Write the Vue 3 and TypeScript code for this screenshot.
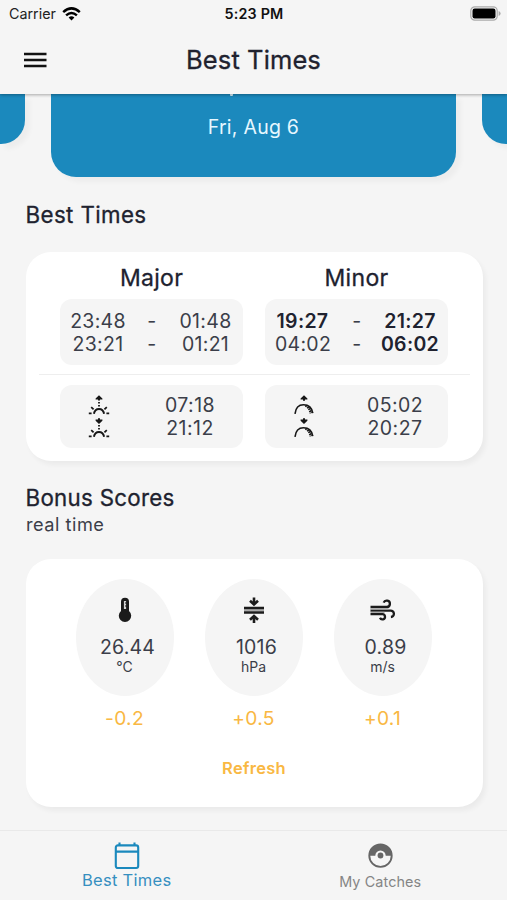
<script setup lang="ts">
interface Span { from: string; to: string; fromBold?: boolean; toBold?: boolean }
interface Period { title: string; kind: 'sun' | 'moon'; spans: Span[]; rise: string; set: string }
interface Score { id: 'temp' | 'pressure' | 'wind'; value: string; unit: string; bonus: string }

const periods: Period[] = [
  {
    title: 'Major', kind: 'sun', rise: '07:18', set: '21:12',
    spans: [{ from: '23:48', to: '01:48' }, { from: '23:21', to: '01:21' }],
  },
  {
    title: 'Minor', kind: 'moon', rise: '05:02', set: '20:27',
    spans: [
      { from: '19:27', to: '21:27', fromBold: true, toBold: true },
      { from: '04:02', to: '06:02', toBold: true },
    ],
  },
]
const scores: Score[] = [
  { id: 'temp', value: '26.44', unit: '°C', bonus: '-0.2' },
  { id: 'pressure', value: '1016', unit: 'hPa', bonus: '+0.5' },
  { id: 'wind', value: '0.89', unit: 'm/s', bonus: '+0.1' },
]
</script>

<template>
  <div class="screen">
    <header class="top">
      <div class="status">
        <div class="carrier">
          <span>Carrier</span>
          <svg width="19" height="14" viewBox="0 0 19 14" fill="none" stroke="#000" stroke-width="2.5">
            <path d="M1.2 5.2Q9.5-2.4 17.8 5.2" />
            <path d="M4.1 8.4Q9.5 3.6 14.9 8.4" />
            <path d="M6.6 10.5Q9.5 8.2 12.4 10.5L9.5 13.6Z" fill="#000" stroke="none" />
          </svg>
        </div>
        <span class="clock">5:23 PM</span>
        <svg class="battery" width="31" height="15" viewBox="0 0 31 15">
          <rect x=".8" y=".8" width="26.4" height="13.4" rx="4" fill="#f5f5f5" stroke="#aaa" stroke-width="1.2" />
          <rect x="2.5" y="2.5" width="23" height="10" rx="2.2" />
          <path d="M28.6 5v5q2-.7 2-2.5T28.6 5Z" fill="#aaa" />
        </svg>
      </div>
      <div class="titlebar">
        <svg width="24" height="18" viewBox="0 0 24 18" stroke="#111" stroke-width="2.5">
          <path d="M1 3H23.5M1 9H23.5M1 15H23.5" />
        </svg>
        <h1>Best Times</h1>
      </div>
    </header>

    <main>
      <section class="carousel">
        <div class="day side left"></div>
        <div class="day current">
          <i class="tail"></i>
          <span>Fri, Aug 6</span>
        </div>
        <div class="day side right"></div>
      </section>

      <h2 class="times-title">Best Times</h2>
      <section class="card times">
        <div class="periods">
          <div v-for="p in periods" :key="p.title" class="period">
            <h3>{{ p.title }}</h3>
            <div class="box">
              <div v-for="s in p.spans" :key="s.from" class="row">
                <span :class="{ bold: s.fromBold }">{{ s.from }}</span>
                <span class="dash">-</span>
                <span :class="{ bold: s.toBold }">{{ s.to }}</span>
              </div>
            </div>
          </div>
        </div>
        <div class="rule"></div>
        <div class="periods astro">
          <div v-for="p in periods" :key="p.title" class="box low">
            <div v-for="dir in (['rise', 'set'] as const)" :key="dir" class="row two">
              <span class="glyph">
                <svg width="22" height="22" viewBox="0 0 22 22" fill="none" stroke="#171717" stroke-width="1.6">
                  <template v-if="p.kind === 'sun'">
                    <path v-if="dir === 'rise'" d="M11 .2L14.4 3.4V4.6H12V5.6H10V4.6H7.6V3.4Z" fill="#171717" stroke="none" />
                    <path v-else d="M11 6L14.4 2.8V1.6H12V.2H10V1.6H7.6V2.8Z" fill="#171717" stroke="none" />
                    <path d="M11 7V8.6M11 10V11.6" stroke-width="1.8" />
                    <path d="M5.9 18.8Q6.8 14 11 14T16.1 18.8" stroke-width="2" />
                    <path d="M.8 18.4H3.6M18.4 18.4H21.2M3.2 12.2L5.6 14.4M18.8 12.2L16.4 14.4" stroke-width="1.8" />
                  </template>
                  <template v-else>
                    <path v-if="dir === 'rise'" d="M11 .2L14.4 3.4V4.6H12V5.8H10V4.6H7.6V3.4Z" fill="#171717" stroke="none" />
                    <path v-else d="M11 6L14.4 2.8V1.6H12V.2H10V1.6H7.6V2.8Z" fill="#171717" stroke="none" />
                    <path d="M2 18.8Q3 9.8 10.5 9.8Q18.5 9.8 19.8 18.2" />
                    <path d="M12.5 10.6Q17 13.6 17.5 18.4" stroke-width="2" stroke-dasharray="1.5 .7" />
                    <path d="M15.5 12.1Q18.5 14.6 18.8 18.4" stroke-width="1.4" stroke-dasharray="1.2 .6" />
                  </template>
                </svg>
              </span>
              <span>{{ p[dir] }}</span>
            </div>
          </div>
        </div>
      </section>

      <h2 class="bonus-title">Bonus Scores</h2>
      <p class="sub">real time</p>
      <section class="card bonus">
        <div class="scores">
          <div v-for="s in scores" :key="s.id" class="score">
            <div class="oval">
              <svg width="28" height="28" viewBox="0 0 28 28" fill="none" stroke="#1b1b1b">
                <template v-if="s.id === 'temp'">
                  <path d="M10 5.7a4 4 0 0 1 8 0V15a6.2 6.2 0 1 1-8 0Z" fill="#1b1b1b" stroke="none" />
                  <path d="M14 5V13" stroke="#d5d5d5" stroke-width="2.2" />
                  <path d="M14 7H16M14 10H16" stroke-width="1" />
                </template>
                <template v-else-if="s.id === 'pressure'">
                  <path d="M4 14.2H24" stroke="#aaa" stroke-width="2" />
                  <path d="M4 12H24M4 16.5H24" stroke-width="2.3" />
                  <path d="M14 1.5V8M10 4.7L14 8.4L18 4.7M14 27V20.5M10 23.8L14 20.1L18 23.8" stroke-width="2.6" />
                </template>
                <template v-else>
                  <path d="M1.5 11H17.8a3.2 3.2 0 1 0-3.1-4.3" stroke-width="2.3" />
                  <path d="M1.5 14.6H21.5a3.2 3.2 0 1 1 .4 6.4" stroke-width="2.3" />
                  <path d="M1.5 18.2H13.5a2.6 2.6 0 1 1-2.5 3.6" stroke-width="2.3" />
                  <path d="M1.5 12.8H19.5M1.5 16.4H15.5" stroke="#aaa" stroke-width="1.3" />
                </template>
              </svg>
              <span class="value">{{ s.value }}</span>
              <span class="unit">{{ s.unit }}</span>
            </div>
            <span class="delta">{{ s.bonus }}</span>
          </div>
        </div>
        <button>Refresh</button>
      </section>
    </main>

    <nav>
      <a class="active">
        <svg width="26" height="28" viewBox="0 0 26 28" fill="none" stroke="#1b89bd" stroke-width="2.1">
          <rect x="1.8" y="3.4" width="22.4" height="22.6" rx="2" />
          <path d="M2 9.6H24M5.5 .6V4M20.5 .6V4" />
        </svg>
        <span>Best Times</span>
      </a>
      <a>
        <svg width="26" height="27" viewBox="0 0 26 27">
          <circle cx="13.5" cy="13.7" r="11.2" fill="none" stroke="#666" stroke-width="1.9" />
          <path d="M2 13.7A11.5 11.5 0 0 1 25 13.7H18.7A5.2 5.2 0 0 0 8.3 13.7Z" fill="#666" />
          <circle cx="13.5" cy="13.5" r="2.9" fill="#666" />
        </svg>
        <span>My Catches</span>
      </a>
    </nav>
  </div>
</template>

<style>
body { margin: 0; background: #f5f5f5; }
</style>

<style scoped>
* { box-sizing: border-box; }
h1, h2, h3, p { margin: 0; }
.screen {
  width: 507px; height: 900px; overflow: hidden;
  display: flex; flex-direction: column;
  background: #f5f5f5; color: #3b3e49;
  font-family: Inter, "Liberation Sans", sans-serif;
}
.top {
  flex: none; height: 94px; position: relative; z-index: 2; background: #f5f5f5;
  box-shadow: 0 1px 3px rgba(0, 0, 0, .32);
}
.status {
  height: 27px; padding: 0 6px 0 9px;
  display: grid; grid-template-columns: 1fr auto 1fr; align-items: center;
  font-size: 14.3px; line-height: 27px; color: #222;
}
.carrier { display: flex; align-items: center; gap: 6px; }
.clock { font-weight: 600; color: #111; font-size: 14.3px; letter-spacing: .2px; margin-right: 2px; }
.battery { justify-self: end; }
.titlebar {
  height: 66px; padding: 0 23px;
  display: grid; grid-template-columns: 24px 1fr 24px; align-items: center;
}
h1, h2, h3 { color: #20222f; font-weight: 400; -webkit-text-stroke: .3px #20222f; }
h1 { font-size: 25.5px; line-height: 30px; letter-spacing: .1px; text-align: center; }
main { flex: 1; min-height: 0; padding: 0 24px 0 26px; }
.carousel {
  height: 83px; margin: 0 -24px 0 -26px;
  display: grid; grid-template-columns: 25px 405px 25px; justify-content: space-between; align-items: start;
}
.day { background: #1b89bd; box-shadow: 5px 5px 5px rgba(0, 0, 0, .035); }
.side { height: 50px; }
.left { border-radius: 0 0 24px 0; }
.right { border-radius: 0 0 0 24px; }
.current {
  height: 83px; border-radius: 0 0 25px 25px;
  display: flex; flex-direction: column; align-items: center;
  color: #e6f7ff; font-size: 19.5px; line-height: 24px; letter-spacing: .25px;
}
.current span { margin-top: 19px; }
.tail { width: 3px; height: 2px; margin-right: 45px; background: #d4edf8; border-radius: 0 0 1px 1px; }
.times-title { margin-top: 24px; }
h2 { font-size: 22.3px; line-height: 28px; letter-spacing: .4px; margin-left: -.5px; }
.card { width: 457px; border-radius: 25px; background: #fff; box-shadow: 3px 4px 5px rgba(0, 0, 0, .045); }
.times { height: 209px; margin-top: 23px; padding: 12px 34px 0; }
.periods { display: grid; grid-template-columns: 183px 183px; gap: 22px; }
h3 { height: 35px; font-size: 23px; line-height: 28px; letter-spacing: .3px; text-align: center; }
.box { height: 66px; padding: 11px 0; border-radius: 12px; background: #f5f5f5; }
.row {
  display: grid; grid-template-columns: 76px 32px 75px; height: 23px;
  text-align: center; font-size: 19.5px; line-height: 23px; letter-spacing: .3px;
}
.bold { font-weight: 600; color: #20222f; margin-right: 1px; }
.rule { height: 1px; margin: 9px -21px 10px; background: #eee; }
.low { height: 63px; padding: 9px 0; }
.two { grid-template-columns: 77px 106px; letter-spacing: .45px; }
.glyph { display: flex; align-items: center; justify-content: center; }
.bonus-title { margin-top: 23px; letter-spacing: .3px; }
.sub { font-size: 18.2px; line-height: 22px; letter-spacing: .5px; padding-top: 1px; }
.bonus { height: 248px; margin-top: 24px; padding: 20px 1px 0 0; display: flex; flex-direction: column; align-items: center; }
.scores { display: flex; gap: 31px; margin-right: 1px; }
.score { width: 98px; display: flex; flex-direction: column; align-items: center; }
.oval {
  width: 98px; height: 117px; border-radius: 50%; background: #f5f5f5;
  display: flex; flex-direction: column; align-items: center; padding-top: 17px;
}
.value { margin: 11px 0 0 6px; font-size: 19.5px; line-height: 24px; letter-spacing: .2px; }
.unit { font-size: 14px; line-height: 16px; }
.delta { margin-top: 10px; font-size: 19.2px; line-height: 24px; letter-spacing: .3px; color: #f9b843; }
button {
  margin-top: 27px; padding: 0; border: 0; background: none;
  font: 600 16.5px/22px Inter, "Liberation Sans", sans-serif; letter-spacing: .3px; color: #f9b843;
}
nav {
  flex: none; height: 70px; padding-top: 11px; border-top: 1px solid #e9e9e9;
  display: grid; grid-template-columns: 1fr 1fr; background: #f5f5f5;
}
nav a { display: flex; flex-direction: column; align-items: center; color: #858585; font-size: 14.4px; letter-spacing: .1px; }
nav a span { line-height: 22px; margin-top: 2px; }
nav .active { color: #368fc0; font-size: 16.5px; letter-spacing: .3px; }
nav .active span { margin-top: -1px; }
</style>
